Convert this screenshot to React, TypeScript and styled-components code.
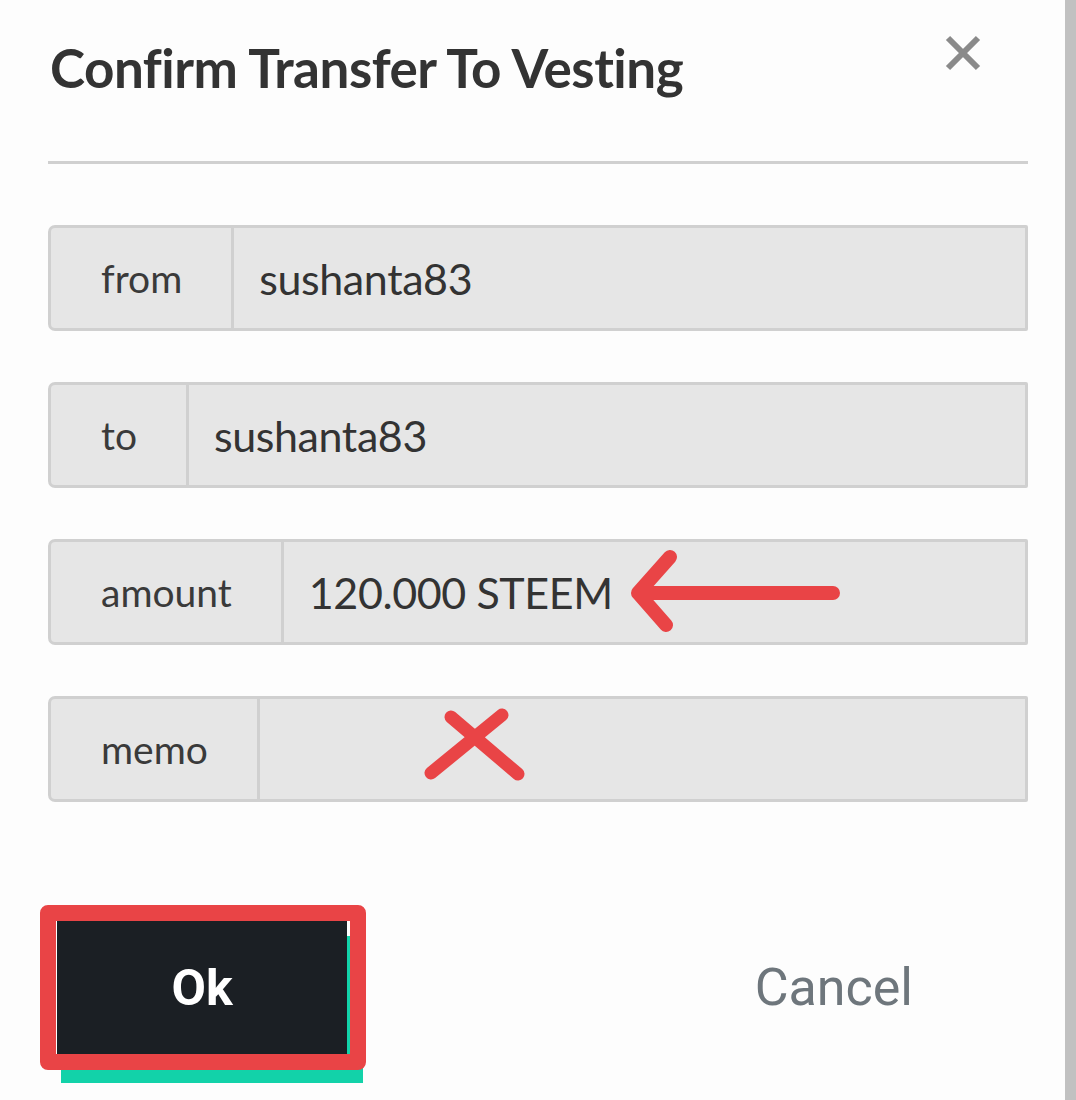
import styled, { createGlobalStyle } from 'styled-components';

const GlobalStyle = createGlobalStyle`
	html, body {
		margin: 0;
		padding: 0;
		background: #fdfdfd;
		overflow: hidden;
	}
`;

const Page = styled.div`
	display: flex;
	width: 1076px;
	height: 1100px;
	background: #fdfdfd;
`;

const Dialog = styled.div`
	flex: 1;
	padding: 0 37px 0 48px;
	display: flex;
	flex-direction: column;
`;

const ScrollTrack = styled.div`
	width: 11px;
	background: #c1c1c1;
`;

const Header = styled.div`
	display: flex;
	justify-content: space-between;
	align-items: flex-start;
	height: 161px;
	border-bottom: 3px solid #d0d0d0;
`;

const Title = styled.h1`
	margin: 36px 0 0 2px;
	font-family: 'Lato', sans-serif;
	font-weight: 700;
	font-size: 53px;
	color: #333333;
	letter-spacing: -0.5px;
`;

const CloseButton = styled.button`
	margin: 33px 45px 0 0;
	padding: 0;
	border: none;
	background: none;
	width: 40px;
	height: 40px;
`;

const Fields = styled.div`
	display: flex;
	flex-direction: column;
	gap: 51px;
	margin-top: 61px;
`;

const Row = styled.div`
	display: flex;
	box-sizing: border-box;
	height: 106px;
	border: 3px solid #d0d0d0;
	border-radius: 7px 2px 2px 7px;
	background: #e6e6e6;
`;

const Label = styled.div`
	display: flex;
	align-items: center;
	padding: 0 49px 0 50px;
	border-right: 3px solid #d0d0d0;
	font-family: 'Lato', sans-serif;
	font-size: 39px;
	color: #3a3a3a;
`;

const Value = styled.div`
	position: relative;
	flex: 1;
	display: flex;
	align-items: center;
	padding-left: 25px;
	font-family: 'Lato', sans-serif;
	font-size: 43px;
	letter-spacing: -0.4px;
	color: #333333;
`;

const Mark = styled.svg<{ $left: number; $top: number }>`
	position: absolute;
	left: ${p => p.$left}px;
	top: ${p => p.$top}px;
	overflow: visible;
`;

const Actions = styled.div`
	display: flex;
	align-items: center;
	justify-content: space-between;
	margin-top: 118px;
	padding: 0 115px 0 9px;
`;

const OkButton = styled.button`
	position: relative;
	width: 290px;
	height: 135px;
	border: none;
	background: #1b1f24;
	color: #ffffff;
	font-family: 'Roboto', sans-serif;
	font-weight: 700;
	font-size: 50px;
	box-shadow: 10px 22px 0 6px #12d2a9;
`;

const RedFrame = styled.span`
	position: absolute;
	top: -15px;
	left: -17px;
	right: -19px;
	bottom: -15px;
	border: 16px solid #e94446;
	border-radius: 8px;
	box-sizing: border-box;
`;

const CancelButton = styled.button`
	border: none;
	background: none;
	padding: 0;
	font-family: 'Roboto', sans-serif;
	font-size: 52px;
	color: #6e767c;
`;

const fields = [
	{ label: 'from', value: 'sushanta83' },
	{ label: 'to', value: 'sushanta83' },
	{ label: 'amount', value: '120.000 STEEM' },
	{ label: 'memo', value: '' },
];

export default function App() {
	return (
		<>
			<GlobalStyle />
			<Page>
				<Dialog>
					<Header>
						<Title>Confirm Transfer To Vesting</Title>
						<CloseButton aria-label="close">
							<svg width="40" height="40" viewBox="0 0 40 40">
								<path d="M5 5 L35 35 M35 5 L5 35" stroke="#8a8a8a" strokeWidth="6" />
							</svg>
						</CloseButton>
					</Header>
					<Fields>
						{fields.map(f => (
							<Row key={f.label}>
								<Label>{f.label}</Label>
								<Value>
									{f.value}
									{f.label === 'amount' &&
										<Mark $left={344} $top={6} width="220" height="90" viewBox="0 0 220 90">
											<path d="M10 45 L205 45 M42 9 L10 45 L38 77" fill="none" stroke="#e94446" strokeWidth="14" strokeLinecap="round" strokeLinejoin="round" />
										</Mark>
									}
									{f.label === 'memo' &&
										<Mark $left={160} $top={9} width="110" height="80" viewBox="0 0 110 80">
											<path d="M31 9 L98 66 M82 7 L11 65" fill="none" stroke="#e94446" strokeWidth="13" strokeLinecap="round" />
										</Mark>
									}
								</Value>
							</Row>
						))}
					</Fields>
					<Actions>
						<OkButton>
							Ok
							<RedFrame />
						</OkButton>
						<CancelButton>Cancel</CancelButton>
					</Actions>
				</Dialog>
				<ScrollTrack />
			</Page>
		</>
	);
}
